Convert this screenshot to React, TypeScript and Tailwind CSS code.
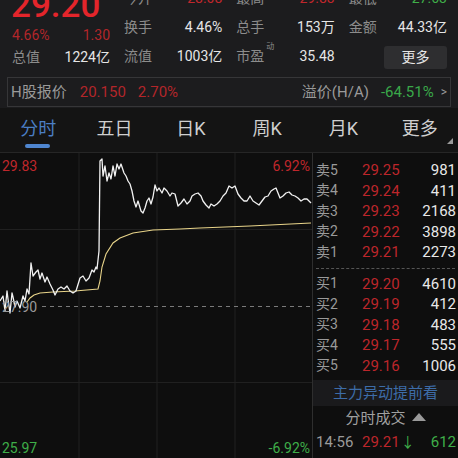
import React from 'react'

const price: [number, number][] = [
  [0, 300], [3, 295], [5, 310], [7, 290], [8, 298], [10, 312], [12, 292], [13, 296], [15, 306], [17, 300], [20, 307], [23, 295], [25, 300], [27, 288], [29, 293],
  [31, 262], [33, 275], [36, 271], [38, 269], [40, 278], [42, 272], [45, 281], [47, 276], [50, 283], [53, 289], [55, 294], [58, 288], [61, 286], [64, 288],
  [67, 285], [70, 290], [73, 292], [76, 290], [80, 277], [83, 275], [86, 280], [89, 277], [92, 269], [94, 271], [96, 266], [97, 268], [99, 250], [100, 160],
  [102, 158], [103, 175], [105, 165], [107, 180], [109, 172], [111, 178], [113, 165], [115, 175], [117, 163], [119, 168], [121, 163], [124, 172], [126, 175],
  [128, 180], [130, 183], [132, 190], [134, 200], [136, 206], [138, 200], [141, 210], [143, 212], [145, 207], [147, 200], [149, 197], [151, 203], [153, 196],
  [155, 184], [157, 190], [159, 187], [162, 192], [164, 187], [167, 190], [170, 195], [172, 192], [175, 193], [178, 205], [181, 202], [184, 198], [187, 203],
  [190, 200], [192, 195], [195, 193], [198, 192], [201, 195], [203, 200], [206, 204], [209, 207], [211, 203], [214, 205], [217, 203], [220, 200], [223, 195],
  [226, 192], [229, 185], [232, 187], [235, 185], [238, 193], [241, 197], [244, 200], [247, 200], [250, 195], [253, 200], [256, 202], [259, 204], [262, 200],
  [265, 196], [268, 195], [271, 190], [274, 188], [276, 187], [278, 192], [280, 197], [283, 195], [286, 192], [289, 191], [292, 194], [295, 195], [298, 197],
  [301, 200], [304, 198], [307, 198], [311, 202],
]

const avg: [number, number][] = [
  [27, 301], [30, 297], [34, 294], [40, 292], [53, 291], [75, 290], [98, 288], [100, 280], [102, 266], [106, 253], [113, 242], [120, 237], [133, 232],
  [153, 229], [180, 228], [200, 227], [250, 225], [311, 222],
]

const toPts = (p: [number, number][]) => p.map(([x, y]) => `${x},${y}`).join(' ')

const sells = [
  { l: '卖5', p: '29.25', v: '981' },
  { l: '卖4', p: '29.24', v: '411' },
  { l: '卖3', p: '29.23', v: '2168' },
  { l: '卖2', p: '29.22', v: '3898' },
  { l: '卖1', p: '29.21', v: '2273' },
]
const buys = [
  { l: '买1', p: '29.20', v: '4610' },
  { l: '买2', p: '29.19', v: '412' },
  { l: '买3', p: '29.18', v: '483' },
  { l: '买4', p: '29.17', v: '555' },
  { l: '买5', p: '29.16', v: '1006' },
]

const tabs = ['分时', '五日', '日K', '周K', '月K', '更多']

function Cell({ label, value, color = 'text-[#e6e6e6]', sup }: { label: string; value: string; color?: string; sup?: string }) {
  return (
    <div className="flex items-center justify-between h-[29px] text-[14px]">
      <span className="text-[#8c8c8c] relative">
        {label}
        {sup && <span className="absolute -top-[5px] -right-[10px] text-[8px]">{sup}</span>}
      </span>
      <span className={color}>{value}</span>
    </div>
  )
}

function BookRow({ l, p, v }: { l: string; p: string; v: string }) {
  return (
    <div className="flex items-center h-[20.5px] pl-[3px] pr-[2px]">
      <span className="w-[46px] text-[14px] text-[#9a9a9a]">{l}</span>
      <span className="text-[15px] text-[#bd262b]">{p}</span>
      <span className="ml-auto text-[15px] text-[#e8e8e8]">{v}</span>
    </div>
  )
}

export default function App() {
  return (
    <div className="w-[458px] h-[458px] overflow-hidden bg-[#1c1c1e] font-['Roboto','Noto_Sans_CJK_SC',sans-serif]">
      {/* quote header */}
      <div className="flex -mt-[16px] pl-[12px] pr-[11px] gap-x-[14px]">
        <div className="w-[98px] shrink-0 flex flex-col">
          <div className="mt-[5px] h-[34px] text-[35px] leading-[34px] font-medium text-[#e4252b] -ml-[1px]">29.20</div>
          <div className="h-[24px] flex items-center justify-between text-[14px] text-[#b3262a]">
            <span>4.66%</span>
            <span>1.30</span>
          </div>
          <div className="h-[20px] flex items-center justify-between text-[14px]">
            <span className="text-[#8c8c8c]">总值</span>
            <span className="text-[#e6e6e6]">1224亿</span>
          </div>
        </div>
        <div className="flex-1 grid grid-cols-3 gap-x-[14px]">
          <Cell label="今开" value="28.08" color="text-[#c0272c]" />
          <Cell label="最高" value="29.83" color="text-[#c0272c]" />
          <Cell label="最低" value="27.63" color="text-[#3fae49]" />
          <Cell label="换手" value="4.46%" />
          <Cell label="总手" value="153万" />
          <Cell label="金额" value="44.33亿" />
          <Cell label="流值" value="1003亿" />
          <Cell label="市盈" sup="动" value="35.48" />
          <div className="flex items-center justify-end h-[29px]">
            <button className="w-[63px] h-[23px] rounded-[3px] bg-[#2e2e30] text-[14px] text-[#e6e6e6] mt-[1px]">更多</button>
          </div>
        </div>
      </div>

      {/* H share bar */}
      <div className="mt-[6px] mx-[7px] h-[30px] border border-[#363638] flex items-center pl-[3px] pr-[3px] text-[15px]">
        <span className="text-[#9a9a9a]">H股报价</span>
        <span className="ml-[13px] text-[#b3262a]">20.150</span>
        <span className="ml-[12px] text-[#b3262a]">2.70%</span>
        <span className="ml-auto text-[#9a9a9a]">溢价(H/A)</span>
        <span className="ml-[12px] text-[#3aa84a]">-64.51%</span>
        <span className="ml-[7px] text-[#9a9a9a] text-[12px]">&gt;</span>
      </div>

      {/* tabs */}
      <div className="mt-[1px] h-[44px] bg-[#141414] grid grid-cols-6 relative">
        {tabs.map((t, i) => (
          <div key={t} className="relative flex items-center justify-center pb-[4px]">
            <span className={`text-[18px] ${i === 0 ? 'text-[#4b7ec4]' : 'text-[#cfcfcf]'}`}>{t}</span>
            {i === 0 && <div className="absolute bottom-[4px] left-[25px] w-[25px] h-[4px] rounded-full bg-[#4f86d0]" />}
          </div>
        ))}
        <div className="absolute right-[5px] bottom-[8px] w-0 h-0 border-l-[6px] border-l-transparent border-b-[6px] border-b-[#9a9a9a]" />
      </div>

      {/* chart + order book */}
      <div className="flex h-[306px] bg-[#0e0e0e] border-t border-[#262626]">
        <div className="relative w-[312px] h-full">
          <svg width="312" height="306" viewBox="0 152 312 306" className="block">
            <g stroke="#202020" strokeWidth="1">
              <line x1="79" y1="152" x2="79" y2="458" />
              <line x1="157" y1="152" x2="157" y2="458" />
              <line x1="235" y1="152" x2="235" y2="458" />
              <line x1="0" y1="228.5" x2="312" y2="228.5" />
              <line x1="0" y1="381.5" x2="312" y2="381.5" />
            </g>
            <line x1="42" y1="305.5" x2="312" y2="305.5" stroke="#7a7a7a" strokeWidth="1" strokeDasharray="4 4" />
            <polyline points={toPts(avg)} fill="none" stroke="#e8d48a" strokeWidth="1.1" />
            <polyline points={toPts(price)} fill="none" stroke="#f2f2f2" strokeWidth="1.3" strokeLinejoin="round" />
          </svg>
          <span className="absolute left-[2px] top-[6px] text-[14px] leading-[14px] text-[#c0272c]">29.83</span>
          <span className="absolute right-[2px] top-[6px] text-[14px] leading-[14px] text-[#c0272c]">6.92%</span>
          <span className="absolute left-[2px] top-[147px] text-[14px] leading-[14px] text-[#9a9a9a]">27.90</span>
          <span className="absolute left-[2px] bottom-[3px] text-[14px] leading-[14px] text-[#3fae49]">25.97</span>
          <span className="absolute right-[2px] bottom-[3px] text-[14px] leading-[14px] text-[#3fae49]">-6.92%</span>
        </div>

        <div className="flex-1 border-l border-[#2e2e2e] flex flex-col pt-[7px]">
          {sells.map((r) => <BookRow key={r.l} {...r} />)}
          <div className="mx-[3px] my-[5px] border-t border-dashed border-[#555]" />
          {buys.map((r) => <BookRow key={r.l} {...r} />)}
          <div className="mt-[4px] h-[26px] bg-[#1a1a1c] flex items-center justify-center text-[15px] text-[#3d6ca8]">主力异动提前看</div>
          <div className="h-[24px] flex items-center justify-center gap-[6px] text-[15px] text-[#a0a0a0]">
            <span>分时成交</span>
            <span className="w-0 h-0 border-l-[7px] border-r-[7px] border-l-transparent border-r-transparent border-b-[8px] border-b-[#9a9a9a] mb-[2px]" />
          </div>
          <div className="h-[24px] flex items-center pl-[3px] pr-[2px] text-[15px]">
            <span className="w-[46px] text-[#9a9a9a]">14:56</span>
            <span className="text-[#bd262b]">29.21</span>
            <span className="text-[#3fae49] text-[14px] ml-[1px]">↓</span>
            <span className="ml-auto text-[#3fae49]">612</span>
          </div>
        </div>
      </div>
    </div>
  )
}
